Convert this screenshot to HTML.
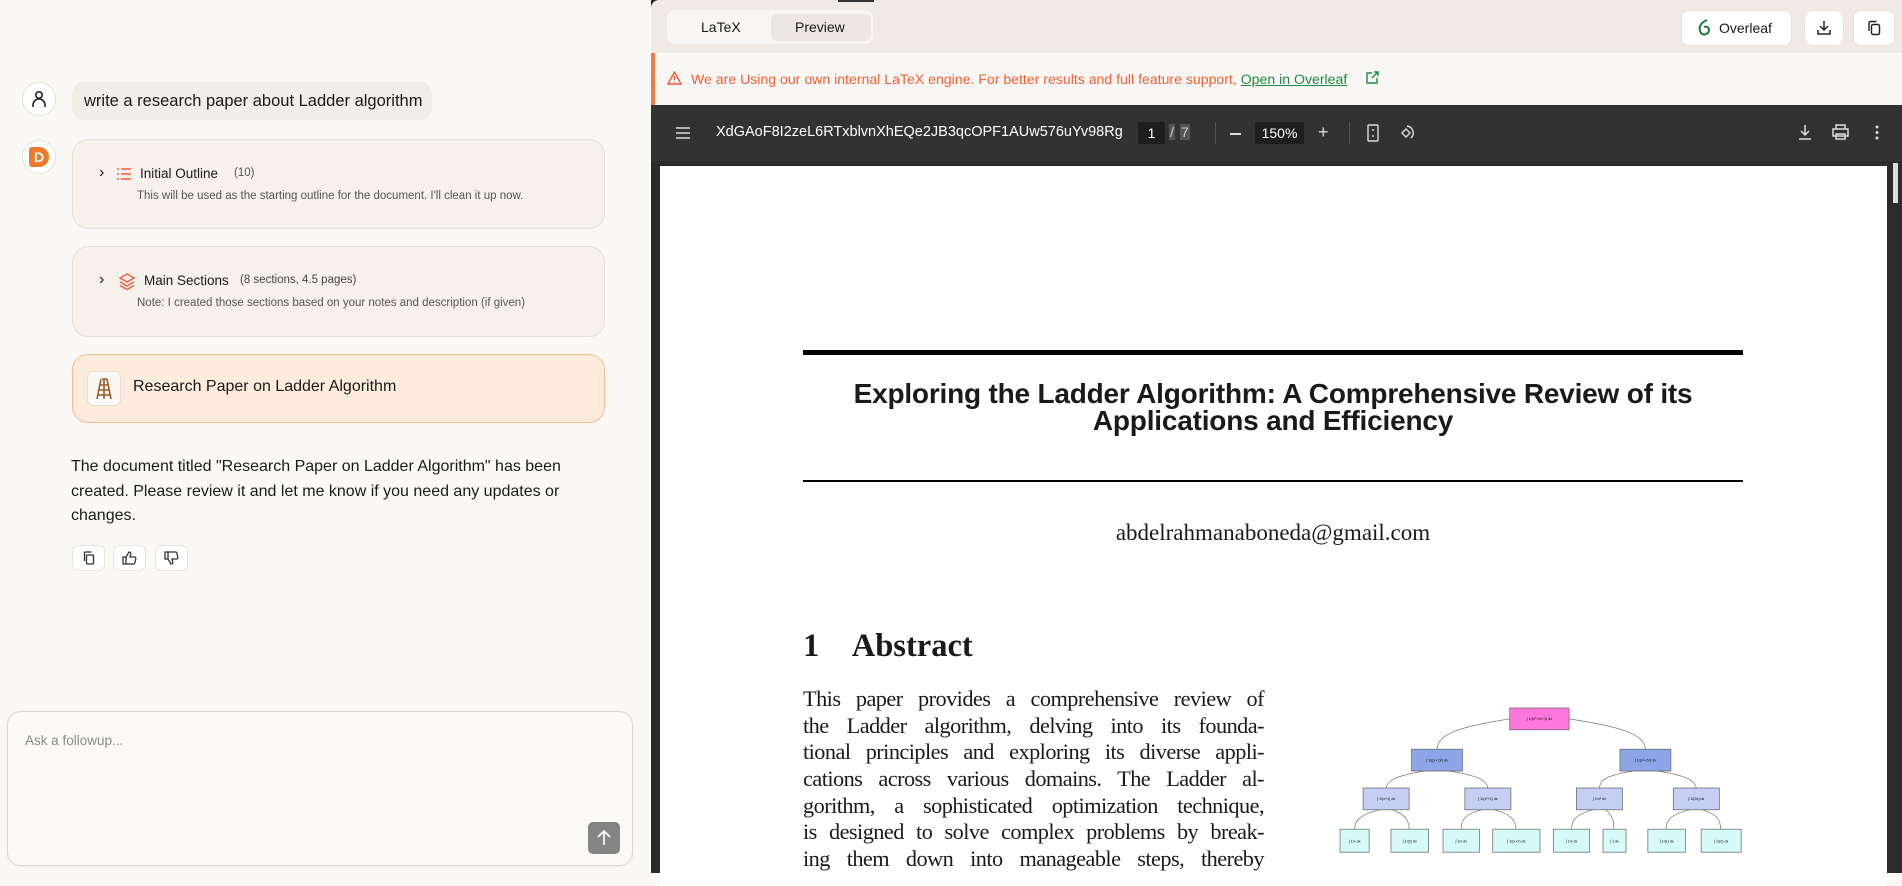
<!DOCTYPE html>
<html><head><meta charset="utf-8"><style>
*{box-sizing:border-box;margin:0;padding:0}
body{width:1902px;height:873px;overflow:hidden;background:#faf9f6;font-family:"Liberation Sans",sans-serif;position:relative;color:#1a1a1a}
.abs{position:absolute}
.left{left:0;top:0;width:651px;height:873px;background:#faf9f6}
.card{position:absolute;left:72px;width:533px;border:1px solid #e6e0d8;border-radius:16px;background:#f6f1ea}
.btn{position:absolute;width:33px;height:26px;border:1px solid #e8e4de;border-radius:6px;background:#fff;display:flex;align-items:center;justify-content:center}
.serif{font-family:"Liberation Serif",serif}
.ab div{text-align:justify;text-align-last:justify;white-space:nowrap;height:26.7px}
</style></head><body>
<div class="abs left">
 <div class="abs" style="left:22px;top:82px;width:34px;height:34px;border-radius:50%;border:1px solid #e4e0da;background:#fff;display:flex;align-items:center;justify-content:center">
  <svg width="16" height="18" viewBox="0 0 16 18" fill="none" stroke="#222" stroke-width="1.6"><circle cx="8" cy="5" r="3.2"/><path d="M2 17v-2a6 6 0 0 1 12 0v2"/></svg></div>
 <div class="abs" style="left:72px;top:82px;width:360px;height:38px;border-radius:12px;background:#f1eee8;font-size:16.5px;line-height:38px;padding-left:12px">write a research paper about Ladder algorithm</div>
 <div class="abs" style="left:22px;top:140px;width:34px;height:34px;border-radius:50%;border:1px solid #e4e0da;background:#fff;display:flex;align-items:center;justify-content:center">
  <div style="width:20px;height:20px;background:#f07a2a;border-radius:3px 10px 10px 3px;color:#fff;font-weight:bold;font-size:14px;text-align:center;line-height:20px">D</div></div>
 <div class="card" style="top:139px;height:90px">
  <span class="abs" style="left:26px;top:24px;font-size:16px">›</span>
  <svg class="abs" style="left:44px;top:28px" width="14" height="12" viewBox="0 0 14 12" stroke="#ef5a3a" stroke-width="1.5"><path d="M0 1h2M4 1h10M0 6h2M4 6h10M0 11h2M4 11h10"/></svg>
  <span class="abs" style="left:67px;top:26px;font-size:13.5px">Initial Outline</span>
  <span class="abs" style="left:161px;top:27px;font-size:11.5px;color:#555">(10)</span>
  <span class="abs" style="left:64px;top:50px;font-size:11.5px;color:#555">This will be used as the starting outline for the document. I'll clean it up now.</span>
 </div>
 <div class="card" style="top:246px;height:91px">
  <span class="abs" style="left:26px;top:24px;font-size:16px">›</span>
  <svg class="abs" style="left:46px;top:26px" width="16" height="17" viewBox="0 0 16 17" fill="none" stroke="#ef5a3a" stroke-width="1.4"><path d="M8 1l7 4-7 4-7-4z M1 9l7 4 7-4 M1 12.5l7 4 7-4"/></svg>
  <span class="abs" style="left:71px;top:26px;font-size:13.5px">Main Sections</span>
  <span class="abs" style="left:167px;top:27px;font-size:11.5px;color:#444">(8 sections, 4.5 pages)</span>
  <span class="abs" style="left:64px;top:50px;font-size:11.5px;color:#555">Note: I created those sections based on your notes and description (if given)</span>
 </div>
 <div class="card" style="top:354px;height:69px;background:#fdebdc;border-color:#f6b98c">
  <div class="abs" style="left:14px;top:16px;width:34px;height:35px;border:1px solid #e6e0d8;border-radius:6px;background:#faf8f4;display:flex;align-items:center;justify-content:center">
   <svg width="16" height="22" viewBox="0 0 16 22" stroke="#9a5a2a" stroke-width="1.6" fill="none"><path d="M5 1L1 21M11 1l4 20M6 1h5M3 7h10M2 12h12M1 17h14M8 1v20"/></svg></div>
  <span class="abs" style="left:60px;top:23px;font-size:16px">Research Paper on Ladder Algorithm</span>
 </div>
 <div class="abs" style="left:71px;top:455px;width:500px;font-size:16px;line-height:24.5px">The document titled "Research Paper on Ladder Algorithm" has been created. Please review it and let me know if you need any updates or changes.</div>
 <div class="btn" style="left:72px;top:545px"><svg width="14" height="14" viewBox="0 0 14 14" fill="none" stroke="#333" stroke-width="1.3"><rect x="4.5" y="4" width="7" height="9" rx="1"/><path d="M2.5 10V2a1 1 0 0 1 1-1h6"/></svg></div>
 <div class="btn" style="left:113px;top:545px"><svg width="15" height="14" viewBox="0 0 15 14" fill="none" stroke="#333" stroke-width="1.3"><path d="M1 6h3v7H1zM4 6l3-5c1.5 0 2 1 1.7 2.3L8 6h4.5a1.3 1.3 0 0 1 1.3 1.5l-1 4.5a1.3 1.3 0 0 1-1.3 1H4"/></svg></div>
 <div class="btn" style="left:155px;top:545px"><svg width="15" height="14" viewBox="0 0 15 14" fill="none" stroke="#333" stroke-width="1.3"><path d="M1 1h3v7H1zM4 8l3 5c1.5 0 2-1 1.7-2.3L8 8h4.5a1.3 1.3 0 0 0 1.3-1.5l-1-4.5a1.3 1.3 0 0 0-1.3-1H4"/></svg></div>
 <div class="abs" style="left:7px;top:711px;width:626px;height:155px;border:1px solid #dedad4;border-radius:14px;background:#fbfaf7;box-shadow:0 1px 3px rgba(0,0,0,.06)">
  <span class="abs" style="left:17px;top:21px;font-size:13.5px;color:#8a8a8a">Ask a followup...</span>
  <div class="abs" style="left:580px;top:110px;width:32px;height:32px;border-radius:5px;background:#858585;display:flex;align-items:center;justify-content:center"><svg width="14" height="16" viewBox="0 0 14 16" fill="none" stroke="#fff" stroke-width="1.6"><path d="M7 15V1M1 7l6-6 6 6"/></svg></div>
 </div>
</div>
<!-- right panel -->
<div class="abs" style="left:651px;top:0;width:1251px;height:873px;background:#2b2b2b"></div>
<div class="abs" style="left:651px;top:0;width:1251px;height:53px;background:#efebe4;border-radius:8px 0 0 0"></div>
<div class="abs" style="left:838px;top:0;width:36px;height:2px;background:#333"></div>
<div class="abs" style="left:667px;top:10px;width:206px;height:34px;border-radius:8px;background:#f8f6f2"></div>
<span class="abs" style="left:701px;top:19px;font-size:14px">LaTeX</span>
<div class="abs" style="left:771px;top:14px;width:100px;height:27px;border-radius:6px;background:#ece8e1"></div>
<span class="abs" style="left:795px;top:19px;font-size:14px">Preview</span>
<div class="abs" style="left:1681px;top:10px;width:111px;height:36px;border-radius:8px;background:#fff;border:1px solid #e6e2dc"></div>
<svg class="abs" style="left:1697px;top:18px" width="14" height="19" viewBox="0 0 14 19" fill="none" stroke="#1e7a3a" stroke-width="2"><path d="M10 2C3 5 1 10 4 15c3 3 8 1 8-3 0-3-3-4-5-3"/></svg>
<span class="abs" style="left:1719px;top:20px;font-size:14px">Overleaf</span>
<div class="abs" style="left:1804px;top:10px;width:40px;height:36px;border-radius:8px;background:#fff;border:1px solid #e6e2dc"></div>
<svg class="abs" style="left:1817px;top:20px" width="14" height="15" viewBox="0 0 14 15" fill="none" stroke="#222" stroke-width="1.5"><path d="M7 1v9M3 6l4 4 4-4M1 10v4h12v-4"/></svg>
<div class="abs" style="left:1853px;top:10px;width:42px;height:36px;border-radius:8px;background:#fff;border:1px solid #e6e2dc"></div>
<svg class="abs" style="left:1867px;top:20px" width="14" height="16" viewBox="0 0 14 16" fill="none" stroke="#222" stroke-width="1.4"><rect x="4.5" y="4.5" width="8" height="10" rx="1.5"/><path d="M2 11V3a1.5 1.5 0 0 1 1.5-1.5h6"/></svg>
<div class="abs" style="left:651px;top:53px;width:1251px;height:52px;background:#f9f7f3;border-left:4px solid #f07a4a"></div>
<svg class="abs" style="left:667px;top:71px" width="15" height="14" viewBox="0 0 15 14" fill="none" stroke="#f05a3a" stroke-width="1.4"><path d="M7.5 1L14 13H1z M7.5 5v4M7.5 10.5v1"/></svg>
<span class="abs" style="left:691px;top:71px;font-size:14.1px;color:#f0603a">We are Using our own internal LaTeX engine. For better results and full feature support, <span style="color:#1f8a45;text-decoration:underline">Open in Overleaf</span></span>
<svg class="abs" style="left:1366px;top:71px" width="13" height="13" viewBox="0 0 13 13" fill="none" stroke="#1f8a45" stroke-width="1.4"><path d="M11 7v5H1V2h5M8 1h4v4M12 1L6 7"/></svg>
<!-- pdf toolbar -->
<div class="abs" style="left:651px;top:105px;width:1251px;height:56px;background:#323232"></div>
<svg class="abs" style="left:676px;top:127px" width="14" height="12" viewBox="0 0 14 12" stroke="#ddd" stroke-width="1.5"><path d="M0 1h14M0 6h14M0 11h14"/></svg>
<span class="abs" style="left:716px;top:124px;font-size:14.5px;color:#fff">XdGAoF8I2zeL6RTxblvnXhEQe2JB3qcOPF1AUw576uYv98Rg</span>
<div class="abs" style="left:1138px;top:122px;width:27px;height:22px;background:#1e1e1e;color:#fff;font-size:14px;text-align:center;line-height:22px">1</div>
<span class="abs" style="left:1169px;top:124px;font-size:14px;color:#ccc;background:#555;padding:0 1px">/</span>
<span class="abs" style="left:1180px;top:124px;font-size:14px;color:#ccc;background:#555;padding:0 1px">7</span>
<div class="abs" style="left:1215px;top:122px;width:1px;height:22px;background:#555"></div>
<div class="abs" style="left:1230px;top:133px;width:11px;height:1.5px;background:#ddd"></div>
<div class="abs" style="left:1255px;top:122px;width:49px;height:22px;background:#1e1e1e;color:#fff;font-size:14px;text-align:center;line-height:22px">150%</div>
<span class="abs" style="left:1318px;top:122px;font-size:18px;color:#ddd">+</span>
<div class="abs" style="left:1349px;top:122px;width:1px;height:22px;background:#555"></div>
<svg class="abs" style="left:1367px;top:124px" width="12" height="18" viewBox="0 0 12 18" fill="none" stroke="#ddd" stroke-width="1.4"><rect x="1" y="1" width="10" height="16" rx="1"/><path d="M6 5v2M6 11v2"/></svg>
<svg class="abs" style="left:1397px;top:124px" width="18" height="18" viewBox="0 0 18 18" fill="none" stroke="#ddd" stroke-width="1.4"><path d="M5 9l4-4 4 4-4 4z M10 2a7 7 0 0 1 4 12"/></svg>
<svg class="abs" style="left:1798px;top:124px" width="14" height="16" viewBox="0 0 14 16" fill="none" stroke="#ddd" stroke-width="1.5"><path d="M7 1v10M3 7l4 4 4-4M1 15h12"/></svg>
<svg class="abs" style="left:1832px;top:124px" width="17" height="16" viewBox="0 0 17 16" fill="none" stroke="#ddd" stroke-width="1.5"><path d="M4 5V1h9v4M1 5h15v7H1zM4 10h9v5H4z"/></svg>
<svg class="abs" style="left:1875px;top:125px" width="4" height="15" viewBox="0 0 4 15" fill="#ddd"><circle cx="2" cy="2" r="1.5"/><circle cx="2" cy="7.5" r="1.5"/><circle cx="2" cy="13" r="1.5"/></svg>
<div class="abs" style="left:1893px;top:163px;width:5px;height:40px;background:#ddd"></div>
<!-- page -->
<div class="abs" style="left:660px;top:166px;width:1227px;height:720px;background:#fff">
 <div class="abs" style="left:143px;top:184px;width:940px;height:5px;background:#000"></div>
 <div class="abs" style="left:103px;top:214px;width:1020px;text-align:center;font-weight:bold;font-size:28px;line-height:27px;letter-spacing:-.2px">Exploring the Ladder Algorithm: A Comprehensive Review of its<br>Applications and Efficiency</div>
 <div class="abs" style="left:143px;top:314px;width:940px;height:2px;background:#000"></div>
 <div class="abs serif" style="left:143px;top:354px;width:940px;text-align:center;font-size:23px">abdelrahmanaboneda@gmail.com</div>
 <div class="abs serif" style="left:143px;top:462px;font-size:32.5px;font-weight:bold;white-space:nowrap">1&nbsp;&nbsp;&nbsp;&nbsp;Abstract</div>
 <div class="abs serif ab" style="left:143px;top:520px;width:461px;font-size:22.3px;line-height:26.7px;letter-spacing:-.55px">
  <div>This paper provides a comprehensive review of</div>
  <div>the Ladder algorithm, delving into its founda-</div>
  <div>tional principles and exploring its diverse appli-</div>
  <div>cations across various domains. The Ladder al-</div>
  <div>gorithm, a sophisticated optimization technique,</div>
  <div>is designed to solve complex problems by break-</div>
  <div>ing them down into manageable steps, thereby</div>
 </div>
 <svg class="abs" style="left:674px;top:537px" width="412" height="153" viewBox="1100 580 340 126" font-family="Liberation Sans" font-size="3" text-anchor="middle">
  <g fill="none" stroke="#777" stroke-width=".6">
   <path d="M1245 593C1200 600 1186 606 1185 618M1294 593C1340 600 1356 606 1357 618"/>
   <path d="M1175 636C1150 640 1144 644 1143 650M1195 636C1220 640 1226 644 1227 650M1347 636C1322 640 1320 644 1319 650M1367 636C1392 640 1398 644 1399 650"/>
   <path d="M1138 668C1120 672 1117 678 1117 684M1148 668C1160 672 1162 678 1162 684M1222 668C1206 672 1205 678 1205 684M1232 668C1248 672 1250 678 1250 684M1314 668C1298 672 1296 678 1296 684M1324 668C1330 672 1331 678 1331 684M1394 668C1376 672 1374 678 1374 684M1404 668C1418 672 1419 678 1419 684"/>
  </g>
  <rect x="1245" y="584" width="49" height="18" fill="#ff77dd" stroke="#666" stroke-width=".6"/><text x="1269.5" y="594">∫ 1/(x²+2x+1) dx</text>
  <g fill="#8ea6e8" stroke="#666" stroke-width=".6"><rect x="1164" y="618" width="42" height="18"/><rect x="1336" y="618" width="42" height="18"/></g>
  <g fill="#c5cff4" stroke="#666" stroke-width=".6"><rect x="1124" y="650" width="38" height="18"/><rect x="1208" y="650" width="38" height="18"/><rect x="1300" y="650" width="38" height="18"/><rect x="1380" y="650" width="38" height="18"/></g>
  <g fill="#d6fafa" stroke="#666" stroke-width=".6"><rect x="1105" y="684" width="24" height="19"/><rect x="1147" y="684" width="31" height="19"/><rect x="1190" y="684" width="30" height="19"/><rect x="1231" y="684" width="39" height="19"/><rect x="1281" y="684" width="30" height="19"/><rect x="1322" y="684" width="19" height="19"/><rect x="1359" y="684" width="31" height="19"/><rect x="1403" y="684" width="33" height="19"/></g>
  <g><text x="1185" y="628">∫ 1/((x+1)²) dx</text><text x="1357" y="628">∫ 1/(x²+2x) dx</text>
  <text x="1143" y="660">∫ 1/(x+1) dx</text><text x="1227" y="660">∫ 1/(x²+1) dx</text><text x="1319" y="660">∫ 1/x² dx</text><text x="1399" y="660">∫ 1/(2x) dx</text>
  <text x="1117" y="695">∫ 1/x dx</text><text x="1162.5" y="695">∫ 1/(2) dx</text><text x="1205" y="695">∫ 1/x dx</text><text x="1250.5" y="695">∫ 1/(x+2) dx</text><text x="1296" y="695">∫ 1/x dx</text><text x="1331.5" y="695">∫ 1 dx</text><text x="1374.5" y="695">∫ 1/(x) dx</text><text x="1419.5" y="695">∫ 1/(2) dx</text></g>
 </svg>
</div>
</body></html>
